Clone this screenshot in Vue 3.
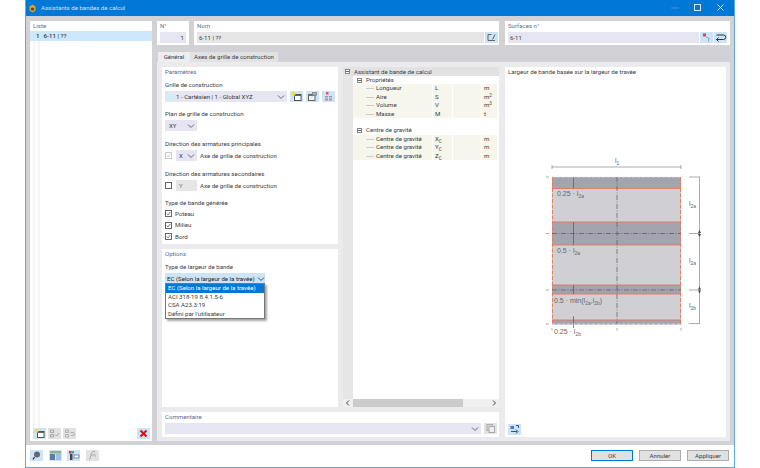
<template>
  <div class="win">
    <header class="titlebar">
      <svg class="appicon" viewBox="0 0 9 9"><path d="M4.500 .5 7.500 2.500v4L4.500 8.500 1.500 6.500v-4z" fill="#d9a520"/><circle cx="4.500" cy="5" r="1.600" fill="#4a4430"/></svg>
      <span class="wintitle">Assistants de bandes de calcul</span>
      <div class="winctl">
        <svg viewBox="0 0 10 10"><path d="M1 5h8" stroke="#3d92dd" fill="none"/></svg>
        <svg viewBox="0 0 10 10"><rect x="1.500" y="1.500" width="6" height="6" stroke="#d6e8f8" fill="none"/></svg>
        <svg viewBox="0 0 10 10"><path d="M1.500 1.500l6 6M7.500 1.500l-6 6" stroke="#d6e8f8" fill="none"/></svg>
      </div>
    </header>

    <div class="body">
      <aside class="listpanel">
        <div class="cap">Liste</div>
        <div class="listsel"><b>1</b><b>6-11 | ??</b></div>
        <div class="liststripes"></div>
        <div class="listtools">
          <button class="ib blue"><svg viewBox="0 0 13 11"><rect x="4.500" y="3.500" width="6.500" height="6" fill="#fff" stroke="#555"/><path d="M4.500 4.200h6.500" stroke="#555" stroke-width="1.400"/><circle cx="3.700" cy="2.800" r="1.900" fill="#f2e02e"/></svg></button>
          <button class="ib grey"><svg viewBox="0 0 13 11"><path d="M2.500 2h3v2.500h-3zM2.500 6.500h3V9h-3zM7 6.500l1.500 1.500L11 5" fill="none" stroke="#a4a4a4"/></svg></button>
          <button class="ib grey"><svg viewBox="0 0 13 11"><path d="M2.500 2h3v2.500h-3zM2.500 6.500h3V9h-3zM7.500 4.500h2.500a1.500 1.500 0 0 1 0 3H8" fill="none" stroke="#b0b0b0"/></svg></button>
          <span class="grow"></span>
          <button class="ib blue"><svg viewBox="0 0 13 11"><path d="M3.500 2.500l6 6M9.500 2.500l-6 6" stroke="#e01010" stroke-width="2" fill="none"/></svg></button>
        </div>
      </aside>

      <main class="right">
        <section class="toprow">
          <div class="card no">
            <div class="cap">N°</div>
            <div class="field lav num">1</div>
          </div>
          <div class="card nom">
            <div class="cap">Nom</div>
            <div class="fieldrow">
              <div class="field dis grow">6-11 | ??</div>
              <button class="ib blue"><svg viewBox="0 0 13 11"><path d="M3 2.500h3.500M3 2.500v6h7M7.500 7.500l2.500-5" fill="none" stroke="#666"/></svg></button>
            </div>
          </div>
          <div class="card surf">
            <div class="cap">Surfaces n°</div>
            <div class="fieldrow">
              <div class="field lav grow">6-11</div>
              <button class="ib blue"><svg viewBox="0 0 13 11"><rect x="3" y="1.500" width="3" height="3" fill="#e2405a"/><path d="M6 5l3.500 1.500L8 7.500l1 2" fill="#fff" stroke="#99a"/></svg></button>
              <button class="ib blue"><svg viewBox="0 0 13 11"><path d="M2.500 3h7a2 2 0 0 1 0 4.500h-7M4.500 5.500l-2 2 2 2" fill="none" stroke="#333"/></svg></button>
            </div>
          </div>
        </section>

        <nav class="tabs">
          <span class="tab on">Général</span>
          <span class="tab axes">Axes de grille de construction</span>
        </nav>

        <section class="tabbody">
          <div class="colleft">
            <div class="card params">
              <div class="heading">Paramètres</div>
              <div class="grp g1">
                <div class="lab">Grille de construction</div>
                <div class="ctrl">
                  <div class="combo gridcombo"><i class="swatch"></i><span>1 - Cartésien | 1 - Global XYZ</span><svg class="chev" viewBox="0 0 8 8"><path d="M1 2.500l3 3 3-3" fill="none" stroke="#667"/></svg></div>
                  <button class="ib blue"><svg viewBox="0 0 13 11"><rect x="4.500" y="3.500" width="6.500" height="6" fill="#fff" stroke="#555"/><path d="M4.500 4.200h6.500" stroke="#555" stroke-width="1.400"/><circle cx="3.700" cy="2.800" r="1.900" fill="#f2e02e"/></svg></button>
                  <button class="ib blue"><svg viewBox="0 0 13 11"><rect x="2.500" y="3.500" width="6.500" height="6" fill="#eee" stroke="#666"/><path d="M2.500 4.200h6.500" stroke="#666" stroke-width="1.400"/><rect x="6.500" y="1.500" width="4" height="3" fill="#aaa" stroke="#777" stroke-width=".6"/></svg></button>
                  <button class="ib blue"><svg viewBox="0 0 13 11"><rect x="4" y="1" width="2.500" height="2.500" fill="#e2506a"/><rect x="3" y="5" width="7" height="4.500" fill="#99a" /><path d="M6.500 5v4.500M3 7h7" stroke="#dde"/></svg></button>
                </div>
              </div>
              <div class="grp g2">
                <div class="lab">Plan de grille de construction</div>
                <div class="combo small"><span>XY</span><svg class="chev" viewBox="0 0 8 8"><path d="M1 2.500l3 3 3-3" fill="none" stroke="#667"/></svg></div>
              </div>
              <div class="grp g3">
                <div class="lab">Direction des armatures principales</div>
                <div class="ctrl dirrow">
                  <span class="check off"><svg viewBox="0 0 8 8"><path d="M1 4l2.200 2.200L7 1.500" fill="none" stroke="#bbb" stroke-width="1.100"/></svg></span>
                  <div class="combo axis"><span>X</span><svg class="chev" viewBox="0 0 8 8"><path d="M1 2.500l3 3 3-3" fill="none" stroke="#667"/></svg></div>
                  <span>Axe de grille de construction</span>
                </div>
              </div>
              <div class="grp g3">
                <div class="lab">Direction des armatures secondaires</div>
                <div class="ctrl dirrow">
                  <span class="check"></span>
                  <div class="combo axis dimmed"><span>Y</span></div>
                  <span>Axe de grille de construction</span>
                </div>
              </div>
              <div class="grp g2">
                <div class="lab">Type de bande générée</div>
                <label v-for="t in bandTypes" :key="t" class="checkrow">
                  <span class="check"><svg viewBox="0 0 8 8"><path d="M1 4l2.200 2.200L7 1.500" fill="none" stroke="#333" stroke-width="1.100"/></svg></span>
                  <span>{{ t }}</span>
                </label>
              </div>
            </div>

            <div class="card options">
              <div class="heading">Options</div>
              <div class="grp optgrp">
                <div class="lab">Type de largeur de bande</div>
                <div class="combo widthcombo"><span>EC (Selon la largeur de la travée)</span><svg class="chev" viewBox="0 0 8 8"><path d="M1 2.500l3 3 3-3" fill="none" stroke="#446"/></svg></div>
              </div>
              <ul class="popup">
                <li v-for="(o, i) in widthOptions" :key="o" :class="{ sel: i === 0 }">{{ o }}</li>
              </ul>
            </div>
          </div>

          <div class="tree">
            <div class="treehead">
              <i class="exp"></i><span>Assistant de bande de calcul</span>
            </div>
            <div class="treegroup">
              <i class="exp inner"></i><span>Propriétés</span>
            </div>
            <div v-for="r in props" :key="r.n" class="treerow">
              <span class="tn">{{ r.n }}</span><span class="ts">{{ r.s }}</span><span></span><span class="tu">{{ r.u }}<sup v-if="r.e">{{ r.e }}</sup></span>
            </div>
            <div class="treeblank"></div>
            <div class="treegroup">
              <i class="exp inner"></i><span>Centre de gravité</span>
            </div>
            <div v-for="r in centre" :key="r.s" class="treerow">
              <span class="tn">Centre de gravité</span><span class="ts">{{ r.s }}<sub>C</sub></span><span></span><span class="tu">m</span>
            </div>
            <div class="treefill"></div>
            <div class="scroll">
              <svg viewBox="0 0 10 8"><path d="M6 1.500L3.500 4 6 6.500" fill="none" stroke="#444"/></svg>
              <div class="thumbtrack"><div class="thumb"></div></div>
              <svg viewBox="0 0 10 8"><path d="M4 1.500L6.500 4 4 6.500" fill="none" stroke="#444"/></svg>
            </div>
          </div>

          <div class="card comment">
            <div class="heading">Commentaire</div>
            <div class="ctrl cmtrow">
              <div class="combo grow"><span class="grow"></span><svg class="chev" viewBox="0 0 8 8"><path d="M1 2.500l3 3 3-3" fill="none" stroke="#667"/></svg></div>
              <button class="ib grey"><svg viewBox="0 0 13 11"><rect x="3" y="1.500" width="5.500" height="6" fill="#ddd" stroke="#aaa"/><rect x="5" y="3.500" width="5.500" height="6" fill="#eee" stroke="#aaa"/></svg></button>
            </div>
          </div>

          <div class="card picture">
            <div class="pictitle">Largeur de bande basée sur la largeur de travée</div>
            <svg class="diagram" viewBox="505 150 221 190">
              <rect x="552" y="177" width="129" height="147.500" fill="#d0d0d4"/>
              <g fill="#a4a4ae">
                <rect x="552" y="177" width="129" height="11.500"/>
                <rect x="552" y="222" width="129" height="23"/>
                <rect x="552" y="285" width="129" height="9"/>
                <rect x="552" y="320" width="129" height="4.500"/>
              </g>
              <g stroke="#e4765a" stroke-width=".9" fill="none">
                <path d="M552 188.500h129M552 222h129M552 245h129M552 285h129M552 294h129M552 320h129"/>
                <path d="M552.500 177v147M680.500 177v147" stroke-dasharray="4 1.500"/>
              </g>
              <g stroke="#56566a" stroke-width=".7" fill="none">
                <path d="M617 177v147M552 233.500h129M552 290h129" stroke-dasharray="5 1.500 1 1.500"/>
                <path d="M573.500 177v11.500M573.500 222v23M573.500 285v9M573.500 316v12"/>
              </g>
              <path d="M552 177h129M552 324h129" stroke="#e8e8ea" stroke-width=".7" stroke-dasharray="3 2" fill="none"/>
              <g stroke="#888" stroke-width=".7" fill="none">
                <path d="M552 167h129M552 165v4M681 165v4"/>
                <path d="M546 177h3M546 233.500h3M546 290h3M546 324h3"/>
                <path d="M689 177h11M689 233.500h11M689 290h11M689 323.500h11M699.500 177v146.500"/>
                <path d="M552 328v2.500M617 328v2.500M681 328v2.500"/>
              </g>
              <g fill="#444">
                <path d="M698 233l1.500-3 1.500 3zM698 234l1.500 3 1.500-3zM698 289.500l1.500-3 1.500 3zM698 290.500l1.500 3 1.500-3z"/>
              </g>
              <g class="dlab">
                <text x="615" y="163">l<tspan class="s" dy="1.500">1</tspan></text>
                <text x="557" y="196">0.25 · l<tspan class="s" dy="1.500">2a</tspan></text>
                <text x="557" y="253">0.5 · l<tspan class="s" dy="1.500">2a</tspan></text>
                <text x="554" y="303">0.5 · min(l<tspan class="s" dy="1.500">2a</tspan><tspan dy="-1.500">,l</tspan><tspan class="s" dy="1.500">2b</tspan><tspan dy="-1.500">)</tspan></text>
                <text x="554" y="334">0.25 · l<tspan class="s" dy="1.500">2b</tspan></text>
                <text x="689" y="206">l<tspan class="s" dy="1.500">2a</tspan></text>
                <text x="689" y="263">l<tspan class="s" dy="1.500">2a</tspan></text>
                <text x="689" y="308">l<tspan class="s" dy="1.500">2b</tspan></text>
              </g>
            </svg>
            <span class="grow"></span>
            <button class="ib blue picbtn"><svg viewBox="0 0 13 11"><path d="M2.500 2h3.500v3H2.500z" fill="#3d7fc4"/><path d="M8 5.500l2 2-2 2M3 7.500h6" fill="none" stroke="#35507a"/><path d="M8 1.500h2.500v2.500" fill="none" stroke="#35507a"/></svg></button>
          </div>
        </section>
      </main>
    </div>

    <footer class="foot">
      <button class="ib blue"><svg viewBox="0 0 13 11"><circle cx="7" cy="4.500" r="3" fill="#667" /><path d="M4.500 7L3 9.500" stroke="#333" stroke-width="1.300"/></svg></button>
      <button class="ib blue"><svg viewBox="0 0 13 11"><rect x="1" y="1" width="11" height="2.500" fill="#8ab870"/><rect x="1" y="4" width="5" height="6" fill="#5d7da8"/><rect x="7" y="4" width="5" height="6" fill="#9fc0e6"/></svg></button>
      <button class="ib blue"><svg viewBox="0 0 13 11"><rect x="2" y="1" width="2.500" height="2.500" fill="#d33"/><rect x="4.500" y="1" width="2.500" height="2.500" fill="#3a8"/><rect x="3" y="4" width="2.500" height="6" fill="#445"/><rect x="7" y="5" width="5" height="3" fill="#fff" stroke="#468" stroke-width=".7"/></svg></button>
      <button class="ib grey"><svg viewBox="0 0 13 11"><path d="M3 9.500c2 0 1.500-8 4-8h2M5 5h3M8.500 3.500l1 3" fill="none" stroke="#aaa"/></svg></button>
      <span class="grow"></span>
      <button class="btn default">OK</button>
      <button class="btn">Annuler</button>
      <button class="btn">Appliquer</button>
    </footer>
  </div>
</template>

<script setup>
const bandTypes = ['Poteau', 'Milieu', 'Bord']
const widthOptions = [
  'EC (Selon la largeur de la travée)',
  'ACI 318-19 8.4.1.5-6',
  'CSA A23.3:19',
  "Défini par l'utilisateur",
]
const props = [
  { n: 'Longueur', s: 'L', u: 'm' },
  { n: 'Aire', s: 'S', u: 'm', e: '2' },
  { n: 'Volume', s: 'V', u: 'm', e: '3' },
  { n: 'Masse', s: 'M', u: 't' },
]
const centre = [{ s: 'X' }, { s: 'Y' }, { s: 'Z' }]
</script>

<style>
html, body { margin: 0; background: #fff; }
</style>

<style scoped>
* { box-sizing: border-box; }
.win {
  margin-left: 25px; width: 710px; height: 468px;
  display: flex; flex-direction: column;
  border: 1px solid #5fa8e0; border-top: 0;
  font: 6.100px/10px Roboto, sans-serif; color: #3c3c3c; background: #fff;
  overflow: hidden;
}
.grow { flex: 1 1 0; min-width: 0; }
button { padding: 0; border: 0; margin: 0; font: inherit; color: inherit; }
.titlebar { height: 16px; flex: none; background: #0078d7; display: flex; align-items: center; padding-left: 3px; margin: 0 -1px; }
.appicon { width: 9px; height: 9px; }
.wintitle { margin-left: 4px; color: #cfe4f6; }
.winctl { margin-left: auto; display: flex; gap: 13px; padding-right: 9px; }
.winctl svg { width: 10px; height: 10px; }
.body { height: 429px; flex: none; background: #d2d2d6; display: flex; padding: 5px 4px 4px; gap: 5px; }
.listpanel { width: 122px; background: #fff; display: flex; flex-direction: column; padding-bottom: 2px; }
.cap { height: 10px; padding-left: 3px; color: #66708a; }
.listsel { height: 10px; background: #cde8fc; display: flex; gap: 4px; padding-left: 6px; }
.listsel b { font-weight: 500; color: #333; }
.liststripes { flex: 1; margin-left: 3px; width: 7px; border-left: 2px solid #f5f5f5; border-right: 2px solid #f5f5f5; }
.listtools { display: flex; gap: 2px; padding: 0 2px 0 3px; }
.ib { width: 13px; height: 11px; flex: none; display: block; }
.ib svg { display: block; width: 13px; height: 11px; }
.ib.blue { background: #cde4f7; }
.ib.grey { background: #e2e2e2; }
.right { width: 573px; display: flex; flex-direction: column; }
.card { background: #fff; }
.toprow { display: flex; gap: 5px; height: 24px; }
.toprow .card { padding: 0 3px; }
.no { width: 32px; }
.nom { width: 305px; padding-right: 1px !important; }
.surf { width: 225px; margin-left: 1px; }
.toprow .cap { padding-left: 0; height: 11px; line-height: 10px; }
.field { height: 11px; line-height: 11px; padding: 0 2px; }
.lav { background: #e6e6f2; }
.dis { background: #e6e6e6; }
.num { text-align: right; }
.fieldrow { display: flex; gap: 1px; }
.tabs { display: flex; margin-top: 7px; height: 10px; margin-left: 1px; }
.tab { background: #e2e2e4; line-height: 10px; text-align: center; }
.tab.on { background: #eeeef0; width: 32px; }
.tab.axes { width: 88px; }
.tabbody {
  height: 379px; background: #ebebed; padding: 5px 0 4px 5px;
  display: grid; gap: 5px;
  grid-template-columns: 176px 156px 222px;
  grid-template-rows: 340px 25px;
}
.colleft { grid-column: 1; grid-row: 1; display: flex; flex-direction: column; gap: 5px; }
.params { height: 177px; padding: 0 3px; }
.options { height: 158px; padding: 0 3px; position: relative; }
.heading { height: 10px; line-height: 10px; color: #5d6a93; }
.lab { height: 10px; line-height: 10px; }
.g1 { margin-top: 3px; }
.g2 { margin-top: 7px; }
.g3 { margin-top: 8px; }
.optgrp { margin-top: 3px; }
.ctrl { display: flex; align-items: center; gap: 3px; margin-top: 1px; }
.combo { height: 11px; background: #e6e6f2; display: flex; align-items: center; padding: 0 2px 0 3px; gap: 2px; }
.combo .chev { width: 8px; height: 8px; margin-left: auto; flex: none; }
.gridcombo { width: 123px; }
.swatch { width: 6px; height: 6px; background: #c7f1f4; flex: none; }
.small { width: 32px; margin-top: 1px; padding-left: 4px; }
.dirrow { gap: 3px; }
.axis { width: 21px; margin-left: 1px; padding-left: 3px; }
.dimmed { background: #e6e6e6; color: #777; }
.check { width: 7px; height: 7px; border: 1px solid #666; background: #fff; flex: none; display: block; }
.check svg { display: block; width: 5px; height: 5px; }
.check.off { border-color: #ccc; }
.checkrow { display: flex; align-items: center; gap: 3px; height: 11.500px; }
.widthcombo { width: 100px; margin-top: 1px; background: #cde4f7; padding-left: 2px; color: #222; white-space: nowrap; }
.popup {
  position: absolute; left: 3px; top: 34px; width: 100px; height: 36px; margin: 0; padding: 0;
  list-style: none; background: #fff; border: 1px solid #777; box-shadow: 2px 2px 2px rgba(0,0,0,.35);
}
.popup li { height: 8.500px; line-height: 8.500px; padding-left: 2px; white-space: nowrap; }
.popup .sel { background: #0078d7; color: #fff; }
.tree { grid-column: 2; grid-row: 1; background: #fff; display: flex; flex-direction: column; position: relative; }
.treehead { height: 9px; background: #e2e2e2; display: flex; align-items: center; gap: 4px; padding-left: 2px; line-height: 9px; flex: none; }
.exp { width: 5px; height: 5px; border: 1px solid #888; background: #fff; display: block; flex: none; position: relative; }
.exp::after { content: ""; position: absolute; left: 0; right: 0; top: 1px; height: 1px; background: #666; }
.treegroup { height: 8.400px; border-left: 10px solid #e6e6e6; display: flex; align-items: center; gap: 4px; padding-left: 4px; line-height: 8.400px; flex: none; }
.treerow {
  height: 8.400px; line-height: 8.400px; flex: none; margin-left: 10px; margin-right: 2px;
  display: grid; grid-template-columns: 79px 20px 29px 16px; background: #f6f6ec;
  position: relative; border-left: 0;
}
.treerow::before { content: ""; position: absolute; left: -10px; top: 0; bottom: 0; width: 10px; background: #e6e6e6; }
.treerow span + span { border-left: 1px solid #fff; padding-left: 2px; }
.tn { padding-left: 23px; position: relative; }
.tn::before { content: ""; position: absolute; left: 13px; width: 8px; top: 4px; border-top: 1px solid #ccc; }
.ts sub { font-size: 4.500px; line-height: 0; }
.tu sup { font-size: 4.500px; line-height: 0; vertical-align: 2px; }
.treeblank { height: 8.400px; border-left: 10px solid #e6e6e6; flex: none; }
.treefill { flex: 1; border-left: 10px solid #e6e6e6; }
.scroll { height: 8px; flex: none; display: flex; background: #f0f0f0; }
.scroll svg { width: 10px; height: 8px; flex: none; }
.thumbtrack { flex: 1; }
.thumb { width: 110px; height: 8px; background: #cbcbcb; }
.comment { grid-column: 1 / span 2; grid-row: 2; padding: 0 2px 0 3px; }
.cmtrow { gap: 3px; margin-top: 1px; }
.picture { grid-column: 3; grid-row: 1 / span 2; display: flex; flex-direction: column; padding: 0 3px 2px; margin-left: 1px; width: 221px; }
.pictitle { height: 10px; line-height: 10px; flex: none; }
.diagram { display: block; width: 221px; height: 190px; margin: 73px -3px 0; flex: none; }
.dlab text { font: 7px "Liberation Sans", sans-serif; fill: #666; }
.dlab .s { font-size: 5px; }
.foot { flex: 1; display: flex; align-items: flex-start; padding: 5px 5px 0 4px; gap: 5px; }
.foot .ib { margin-right: 0.500px; }
.btn { width: 42px; height: 11px; line-height: 9px; background: #e1e1e1; border: 1px solid #adadad; text-align: center; margin-left: 1px; }
.btn.default { border-color: #0078d7; }
</style>
